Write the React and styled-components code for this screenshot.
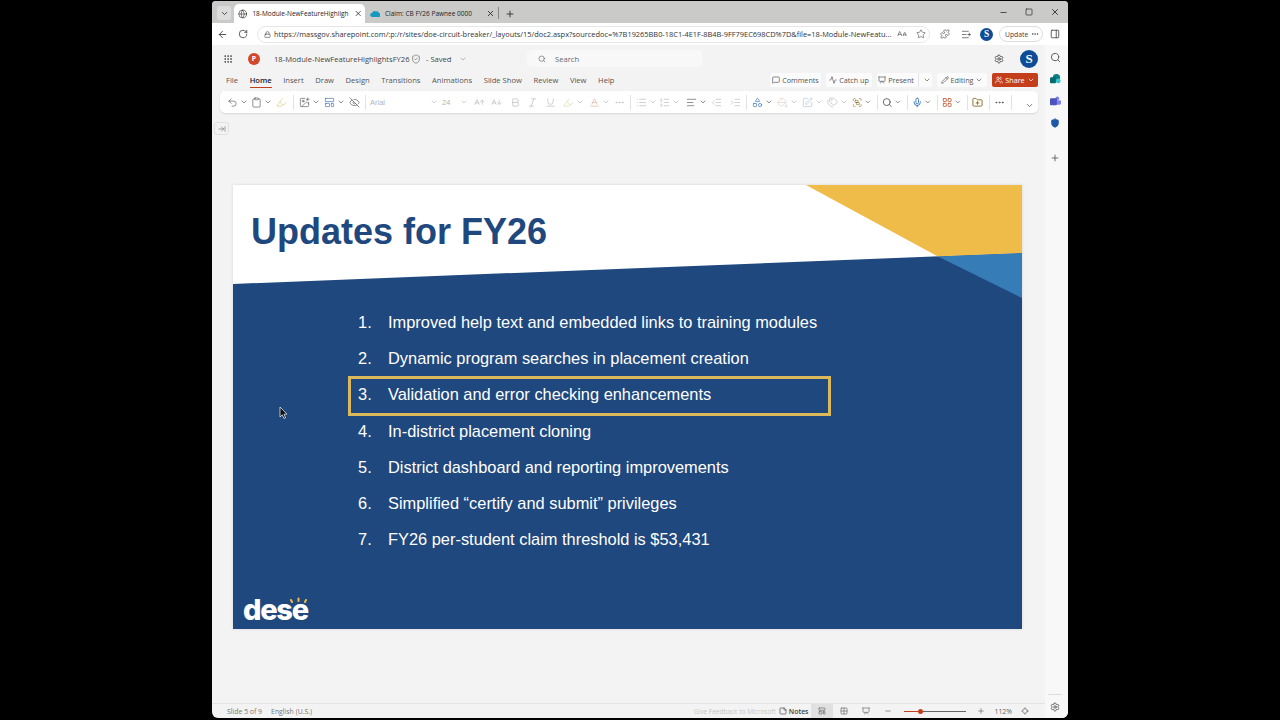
import React from 'react'
import styled, { createGlobalStyle } from 'styled-components'
import {
  Globe, X, Plus, Minus, Square, ChevronDown, ArrowLeft, RotateCw, Lock, Star, Puzzle, ListPlus, PanelRight,
  Search, Settings, MessageSquare, Activity, Presentation, Pencil, Users, Undo2, Clipboard, Highlighter,
  ImagePlus, LayoutTemplate, EyeOff, Bold, Italic, Underline, Baseline, MoreHorizontal,
  List, ListOrdered, AlignLeft, Outdent, Indent, Shapes, PaintBucket, SquarePen, Tags, Group, Mic,
  LayoutGrid, FolderPlus, ArrowRightToLine, StickyNote, Grid2x2, Locate, Shield, ShieldCheck, Grip, AArrowUp, AArrowDown, ALargeSmall
} from 'lucide-react'

const GlobalStyle = createGlobalStyle`
  html, body { margin: 0; padding: 0; background: #000; }
  * { box-sizing: border-box; }
`

const Stage = styled.div`
  width: 1280px;
  height: 720px;
  background: #000;
  display: flex;
  justify-content: center;
  overflow: hidden;
  font-family: "Open Sans", "Noto Sans", sans-serif;
`

const Win = styled.div`
  width: 856px;
  height: 717px;
  margin-top: 1px;
  display: flex;
  flex-direction: column;
  background: #f3f3f3;
  border-radius: 4px 4px 6px 6px;
  overflow: hidden;
`

const TabStrip = styled.div`
  height: 22px;
  flex: none;
  background: #cacbc9;
  display: flex;
  align-items: flex-end;
  padding-left: 5px;
  color: #222;
`

const TabMenu = styled.div`
  width: 14px;
  height: 14px;
  margin-bottom: 3px;
  margin-right: 3px;
  border-radius: 3px;
  background: #dcdcdc;
  display: flex;
  align-items: center;
  justify-content: center;
`

const Tab = styled.div`
  width: ${p => p.$w}px;
  height: 19px;
  display: flex;
  align-items: center;
  gap: 5px;
  padding: 0 3px 0 ${p => p.$active ? 4 : 5}px;
  background: ${p => p.$active ? '#fff' : 'transparent'};
  border-radius: 5px 5px 0 0;
  font-size: 6.5px;
  white-space: nowrap;
`

const TabText = styled.span`
  flex: 1;
`

const TabSep = styled.div`
  width: 1px;
  height: 12px;
  margin: 0 6px 4px 0;
  background: #888;
  align-self: flex-end;
`

const PlusWrap = styled.div`
  height: 19px;
  display: flex;
  align-items: center;
`

const WinControls = styled.div`
  margin-left: auto;
  height: 22px;
  display: flex;
  align-items: center;
  gap: 17px;
  padding-right: 8px;
`

const AddressBar = styled.div`
  height: 22px;
  flex: none;
  background: #fff;
  display: flex;
  align-items: center;
  padding: 0 7px 0 5px;
  color: #444;
`

const NavIcons = styled.div`
  width: 40px;
  display: flex;
  gap: 10px;
  align-items: center;
`

const UrlPill = styled.div`
  width: 673px;
  height: 17px;
  flex: none;
  border: 1px solid #e6e6e6;
  border-radius: 9px;
  display: flex;
  align-items: center;
  padding: 0 3px 0 6px;
  gap: 3px;
`

const UrlText = styled.div`
  flex: 1;
  font-size: 7.42px;
  color: #333;
  white-space: nowrap;
`

const StarWrap = styled.span`
  display: flex;
  margin-left: 6px;
`

const BarItem = styled.div`
  display: flex;
  flex: none;
  margin-left: ${p => p.$ml}px;
`

const Avatar = styled.div`
  width: ${p => p.$size}px;
  height: ${p => p.$size}px;
  border-radius: 50%;
  background: #0f4c97;
  color: #fff;
  font-family: "Liberation Serif", serif;
  font-weight: bold;
  font-size: ${p => p.$size * 0.72}px;
  display: flex;
  align-items: center;
  justify-content: center;
  flex: none;
`

const UpdatePill = styled.div`
  width: 44px;
  height: 16px;
  border: 1px solid #ddd;
  border-radius: 8px;
  font-size: 6.8px;
  color: #444;
  display: flex;
  align-items: center;
  justify-content: space-between;
  padding: 0 3px 0 5px;
`

const Body = styled.div`
  flex: 1;
  display: flex;
  min-height: 0;
`

const Main = styled.div`
  width: 833px;
  display: flex;
  flex-direction: column;
`

const Side = styled.div`
  flex: 1;
  background: #f8f8f8;
  display: flex;
  flex-direction: column;
  align-items: center;
  padding: 7px 3px 0 0;
  gap: 11px;
  color: #555;
`

const SideBottom = styled.div`
  margin-top: auto;
  width: 14px;
  height: 24px;
  border-top: 1px solid #ddd;
  display: flex;
  justify-content: center;
  padding-top: 7px;
`

const SideSep = styled.div`
  height: 3px;
`

const TitleRow = styled.div`
  height: 27px;
  flex: none;
  display: flex;
  align-items: center;
  padding-left: 11px;
  color: #444;
  font-size: 7.6px;
`

const PptMark = styled.div`
  width: 12px;
  height: 12px;
  margin-left: 15px;
  margin-right: 14px;
  flex: none;
  border-radius: 50%;
  background: #d2492a;
  color: #fff;
  font-size: 7px;
  font-weight: 700;
  display: flex;
  align-items: center;
  justify-content: center;
`

const DocName = styled.span`
  width: 137px;
  white-space: nowrap;
`

const Saved = styled.span`
  margin-left: 5px;
  width: 33px;
  white-space: nowrap;
`

const SearchBox = styled.div`
  width: 175px;
  height: 17px;
  margin-left: 60px;
  background: #f8f8f8;
  border-radius: 4px;
  display: flex;
  align-items: center;
  gap: 9px;
  padding-left: 11px;
  color: #666;
`

const TitleRight = styled.div`
  margin-left: auto;
  display: flex;
  align-items: center;
  gap: 16px;
  padding-right: 7px;
`

const MenuRow = styled.div`
  height: 16px;
  flex: none;
  display: flex;
  align-items: center;
  padding-left: 14px;
  font-size: 7.6px;
  color: #555;
`

const MenuItems = styled.div`
  display: flex;
  gap: 11.6px;
`

const MenuItem = styled.div`
  position: relative;
  white-space: nowrap;
  font-weight: ${p => p.$active ? 600 : 400};
  color: ${p => p.$active ? '#222' : '#555'};
  &::after {
    content: '';
    display: ${p => p.$active ? 'block' : 'none'};
    position: absolute;
    left: 0;
    right: 0;
    bottom: -3px;
    height: 1.5px;
    background: #c43e1c;
  }
`

const Actions = styled.div`
  margin-left: auto;
  display: flex;
  gap: 5px;
  padding-right: 7px;
`

const ActionBtn = styled.div`
  width: ${p => p.$w}px;
  height: 14px;
  flex: none;
  background: ${p => p.$primary ? '#c43e1c' : '#fbfbfb'};
  color: ${p => p.$primary ? '#fff' : '#555'};
  border-radius: 2px;
  font-size: 7.2px;
  display: flex;
  align-items: center;
  justify-content: center;
  gap: 2px;
  white-space: nowrap;
`

const SplitLine = styled.span`
  width: 1px;
  height: 14px;
  background: #e4e4e4;
  margin: 0 2px 0 2px;
`

const Ribbon = styled.div`
  height: 22px;
  flex: none;
  margin: 3px 7px 0 8px;
  padding-left: 7px;
  background: #fff;
  border-radius: 5px;
  box-shadow: 0 1px 2px rgba(0,0,0,.12);
  display: flex;
  align-items: center;
  color: #555;
`

const Tool = styled.div`
  width: ${p => p.$w}px;
  flex: none;
  display: flex;
  align-items: center;
  gap: 2px;
  color: ${p => p.$color || '#555'};
  opacity: ${p => p.$off ? 0.42 : 1};
`

const RibbonSep = styled.div`
  width: ${p => p.$w || 10}px;
  height: 15px;
  flex: none;
  display: flex;
  justify-content: center;
  &::after { content: ''; width: 1px; background: #e2e2e2; }
`

const FontBox = styled.div`
  width: ${p => p.$w}px;
  flex: none;
  font-size: 7.5px;
  color: #b4b4b4;
  display: flex;
  align-items: center;
  justify-content: space-between;
  padding-right: ${p => p.$pad}px;
  font-family: "Liberation Sans", sans-serif;
`

const RibbonEnd = styled.div`
  margin-left: auto;
  padding-right: 4px;
  padding-top: 6px;
  display: flex;
  color: #555;
`

const Canvas = styled.div`
  flex: 1;
  position: relative;
  padding: 72px 0 0 21px;
  min-height: 0;
`

const PaneBtn = styled.div`
  position: absolute;
  top: 9px;
  left: 2px;
  width: 15px;
  height: 13px;
  border: 1px solid #e0e0e0;
  border-radius: 3px;
  display: flex;
  align-items: center;
  justify-content: center;
  color: #777;
`

const Slide = styled.div`
  position: relative;
  width: 789px;
  height: 444px;
  background: #fff;
  box-shadow: 0 0 3px rgba(0,0,0,.12);
  font-family: "Liberation Sans", Arial, sans-serif;
  display: flex;
  flex-direction: column;
`

const SlideArt = styled.svg`
  position: absolute;
  inset: 0;
`

const SlideTitle = styled.h1`
  position: relative;
  height: 92px;
  margin: 0;
  padding: 2px 0 0 18px;
  display: flex;
  align-items: center;
  font-size: 36px;
  font-weight: 700;
  color: #1f487e;
`

const Items = styled.ol`
  position: relative;
  list-style: none;
  width: 481px;
  margin: 27px 0 0 116px;
  padding: 0;
`

const Item = styled.li`
  position: relative;
  height: 36.3px;
  padding-left: 9px;
  display: flex;
  align-items: center;
  font-size: 16.4px;
  color: #fff;
  white-space: nowrap;
  &::after {
    content: '';
    display: ${p => p.$selected ? 'block' : 'none'};
    position: absolute;
    inset: -1px -1px -3px -1px;
    border: 3px solid #dbb95a;
  }
`

const ItemNum = styled.span`
  width: 30px;
  flex: none;
`

const Logo = styled.div`
  position: relative;
  margin-top: auto;
  padding: 0 0 3px 10px;
  display: flex;
  align-items: flex-end;
  color: #fff;
  font-family: "Inter", "Liberation Sans", sans-serif;
  font-size: 29px;
  font-weight: 800;
  letter-spacing: -1.3px;
  line-height: 1.1;
`

const LogoDots = styled.svg`
  position: absolute;
  left: 57px;
  top: 3px;
`

const Pointer = styled.svg`
  position: absolute;
  left: 46px;
  top: 222px;
`

const StatusBar = styled.div`
  height: 15px;
  flex: none;
  border-top: 1px solid #e3e3e3;
  display: flex;
  align-items: center;
  padding-left: 15px;
  font-size: 6.9px;
  color: #777;
  gap: 9px;
`

const StatusRight = styled.div`
  margin-left: auto;
  display: flex;
  align-items: center;
  color: #666;
  padding-right: 16px;
`

const Feedback = styled.span`
  color: #c6c6c6;
  margin-right: 3px;
  font-size: 6.5px;
`

const NotesBtn = styled.span`
  display: flex;
  align-items: center;
  gap: 2px;
  color: #444;
  font-weight: 600;
  margin-right: 3px;
`

const ViewBtn = styled.div`
  width: 22px;
  height: 14px;
  display: flex;
  align-items: center;
  justify-content: center;
  background: ${p => p.$active ? '#e1e1e1' : 'transparent'};
`

const ZoomTrack = styled.div`
  width: 62px;
  height: 1px;
  margin: 0 11px 0 5px;
  display: flex;
  align-items: center;
  background: #666;
`

const ZoomFill = styled.div`
  width: 14px;
  height: 1px;
  background: #c43e1c;
`

const ZoomThumb = styled.div`
  width: 5px;
  height: 5px;
  border-radius: 50%;
  background: #c43e1c;
`

const ZoomPct = styled.span`
  margin: 0 9px;
`

const items = [
  'Improved help text and embedded links to training modules',
  'Dynamic program searches in placement creation',
  'Validation and error checking enhancements',
  'In-district placement cloning',
  'District dashboard and reporting improvements',
  'Simplified “certify and submit” privileges',
  'FY26 per-student claim threshold is $53,431',
]

const menus = ['File', 'Home', 'Insert', 'Draw', 'Design', 'Transitions', 'Animations', 'Slide Show', 'Review', 'View', 'Help']

// icon, chevron, slot width, colour, disabled
const firstTools = [
  [Undo2, true, 24],
  [Clipboard, true, 25],
  [Highlighter, false, 12, '#d6c77c'],
]
const slideTools = [
  [ImagePlus, true, 25],
  [LayoutTemplate, true, 25, '#3d6ea5'],
  [EyeOff, false, 11],
]
const fontTools = [
  [AArrowUp, false, 17, null, true],
  [AArrowDown, false, 19, null, true],
  [Bold, false, 17, null, true],
  [Italic, false, 18, null, true],
  [Underline, false, 18, null, true],
  [Highlighter, true, 26, '#a8a030', true],
  [Baseline, true, 25, '#c43e1c', true],
  [MoreHorizontal, false, 11, null, true],
]
const paraTools = [
  [List, true, 23, null, true],
  [ListOrdered, true, 27, null, true],
  [AlignLeft, true, 25],
  [Outdent, false, 19, null, true],
  [Indent, false, 11, null, true],
]
const drawTools = [
  [Shapes, true, 25, '#2f6fb5'],
  [PaintBucket, true, 25, '#b08a70', true],
  [SquarePen, true, 25, '#3d6ea5', true],
  [Tags, true, 25, null, true],
  [Group, true, 20, '#8a6a20'],
]

const ToolGroup = ({ tools }) => tools.map(([Icon, chevron, w, color, off], i) => (
  <Tool key={i} $w={w} $color={color} $off={off}>
    <Icon size={11} strokeWidth={1.4} />
    {chevron && <ChevronDown size={8} color="#555" />}
  </Tool>
))

const App = () => {
  return (
    <Stage>
      <GlobalStyle />
      <Win>
        <TabStrip>
          <TabMenu><ChevronDown size={9} /></TabMenu>
          <Tab $active $w={131}>
            <Globe size={10} strokeWidth={1.5} />
            <TabText>18-Module-NewFeatureHighligh</TabText>
            <X size={9} strokeWidth={2.2} />
          </Tab>
          <Tab $w={133}>
            <svg width="10" height="8" viewBox="0 0 20 14"><path d="M5 13a4 4 0 0 1-1-8 5 5 0 0 1 8-3 4 4 0 0 1 6 3 4 4 0 0 1-2 8z" fill="#1798c1" /></svg>
            <TabText>Claim: CB FY26 Pawnee 0000</TabText>
            <X size={9} strokeWidth={2.2} />
          </Tab>
          <TabSep />
          <PlusWrap><Plus size={10} /></PlusWrap>
          <WinControls>
            <Minus size={9} strokeWidth={2} />
            <Square size={8} strokeWidth={2} />
            <X size={10} strokeWidth={2} />
          </WinControls>
        </TabStrip>
        <AddressBar>
          <NavIcons>
            <ArrowLeft size={11} />
            <RotateCw size={10} />
          </NavIcons>
          <UrlPill>
            <Lock size={7} />
            <UrlText>https://massgov.sharepoint.com/:p:/r/sites/doe-circuit-breaker/_layouts/15/doc2.aspx?sourcedoc=%7B19265BB0-18C1-4E1F-8B4B-9FF79EC698CD%7D&amp;file=18-Module-NewFeatu...</UrlText>
            <ALargeSmall size={10} strokeWidth={1.4} />
            <StarWrap><Star size={10} strokeWidth={1.4} /></StarWrap>
          </UrlPill>
          <BarItem $ml={10}><Puzzle size={10} strokeWidth={1.5} /></BarItem>
          <BarItem $ml={11}><ListPlus size={11} strokeWidth={1.5} /></BarItem>
          <BarItem $ml={8}><Avatar $size={13}>S</Avatar></BarItem>
          <BarItem $ml={6}><UpdatePill>Update <MoreHorizontal size={8} /></UpdatePill></BarItem>
          <BarItem $ml={7}><PanelRight size={10} /></BarItem>
        </AddressBar>
        <Body>
          <Main>
            <TitleRow>
              <Grip size={10} />
              <PptMark>P</PptMark>
              <DocName>18-Module-NewFeatureHighlightsFY26</DocName>
              <ShieldCheck size={10} strokeWidth={1.3} />
              <Saved>- Saved</Saved>
              <ChevronDown size={8} color="#999" />
              <SearchBox><Search size={8} />Search</SearchBox>
              <TitleRight>
                <Settings size={10} />
                <Avatar $size={18}>S</Avatar>
              </TitleRight>
            </TitleRow>
            <MenuRow>
              <MenuItems>
                {menus.map(m => <MenuItem key={m} $active={m === 'Home'}>{m}</MenuItem>)}
              </MenuItems>
              <Actions>
                <ActionBtn $w={51}><MessageSquare size={8} />Comments</ActionBtn>
                <ActionBtn $w={46}><Activity size={8} />Catch up</ActionBtn>
                <ActionBtn $w={55}><Presentation size={8} />Present<SplitLine /><ChevronDown size={8} /></ActionBtn>
                <ActionBtn $w={50}><Pencil size={8} />Editing<ChevronDown size={8} /></ActionBtn>
                <ActionBtn $w={46} $primary><Users size={8} />Share<ChevronDown size={8} /></ActionBtn>
              </Actions>
            </MenuRow>
            <Ribbon>
              <ToolGroup tools={firstTools} />
              <RibbonSep $w={11} />
              <ToolGroup tools={slideTools} />
              <RibbonSep />
              <FontBox $w={72} $pad={4}>Arial<ChevronDown size={8} color="#bbb" /></FontBox>
              <FontBox $w={32} $pad={6}>24<ChevronDown size={8} color="#bbb" /></FontBox>
              <ToolGroup tools={fontTools} />
              <RibbonSep $w={11} />
              <ToolGroup tools={paraTools} />
              <RibbonSep $w={11} />
              <ToolGroup tools={drawTools} />
              <RibbonSep />
              <Tool $w={20}><Search size={11} /><ChevronDown size={8} /></Tool>
              <RibbonSep />
              <Tool $w={20} $color="#2f6fb5"><Mic size={11} /><ChevronDown size={8} color="#555" /></Tool>
              <RibbonSep />
              <Tool $w={20} $color="#c0603c"><LayoutGrid size={11} /><ChevronDown size={8} color="#555" /></Tool>
              <RibbonSep />
              <Tool $w={12} $color="#8a6a20"><FolderPlus size={11} /></Tool>
              <RibbonSep />
              <Tool $w={12}><MoreHorizontal size={11} /></Tool>
              <RibbonSep />
              <RibbonEnd><ChevronDown size={9} /></RibbonEnd>
            </Ribbon>
            <Canvas>
              <PaneBtn><ArrowRightToLine size={8} /></PaneBtn>
              <Slide>
                <SlideArt width="789" height="444" viewBox="0 0 789 444">
                  <polygon points="0,99 789,68 789,444 0,444" fill="#1f487e" />
                  <polygon points="573,0 789,0 789,68 705,71.5" fill="#efbb49" />
                  <polygon points="705,71.5 789,68 789,113" fill="#367cb7" />
                </SlideArt>
                <SlideTitle>Updates for FY26</SlideTitle>
                <Items>
                  {items.map((text, i) => (
                    <Item key={i} $selected={i === 2}>
                      <ItemNum>{i + 1}.</ItemNum>{text}
                    </Item>
                  ))}
                </Items>
                <Logo>
                  dese
                  <LogoDots width="17" height="7" viewBox="0 0 17 7">
                    <path d="M2 5 1 3M8.5 4V1.5M15 5l1-2" stroke="#efbb49" strokeWidth="2" strokeLinecap="round" />
                  </LogoDots>
                </Logo>
                <Pointer width="8" height="12" viewBox="0 0 8 12">
                  <path d="M1 0v10l2.3-2.2L5 11.5l1.6-.7L5 7.2h3z" fill="#111" stroke="#fff" strokeWidth=".7" />
                </Pointer>
              </Slide>
            </Canvas>
            <StatusBar>
              Slide 5 of 9
              <span>English (U.S.)</span>
              <StatusRight>
                <Feedback>Give Feedback to Microsoft</Feedback>
                <NotesBtn><StickyNote size={8} />Notes</NotesBtn>
                <ViewBtn $active><LayoutTemplate size={8} /></ViewBtn>
                <ViewBtn><Grid2x2 size={8} /></ViewBtn>
                <ViewBtn><Presentation size={8} /></ViewBtn>
                <ViewBtn><Minus size={8} /></ViewBtn>
                <ZoomTrack><ZoomFill /><ZoomThumb /></ZoomTrack>
                <Plus size={8} />
                <ZoomPct>112%</ZoomPct>
                <Locate size={8} />
              </StatusRight>
            </StatusBar>
          </Main>
          <Side>
            <Search size={11} />
            <svg width="11" height="11" viewBox="0 0 12 12">
              <circle cx="7" cy="4" r="4" fill="#0f7c83" /><circle cx="9" cy="7.5" r="2.6" fill="#37c6d0" /><rect x="0" y="3.5" width="6.5" height="6.5" rx="1" fill="#036c70" />
            </svg>
            <svg width="11" height="11" viewBox="0 0 12 12">
              <circle cx="8" cy="2.5" r="2" fill="#7b83eb" /><rect x="6" y="4.5" width="6" height="5" rx="1.5" fill="#7b83eb" /><rect x="0" y="2.5" width="7.5" height="7.5" rx="1" fill="#4b53bc" />
            </svg>
            <Shield size={10} color="#1f5aa8" fill="#1f5aa8" />
            <SideSep />
            <Plus size={10} />
            <SideBottom><Settings size={10} /></SideBottom>
          </Side>
        </Body>
      </Win>
    </Stage>
  )
}

export default App
